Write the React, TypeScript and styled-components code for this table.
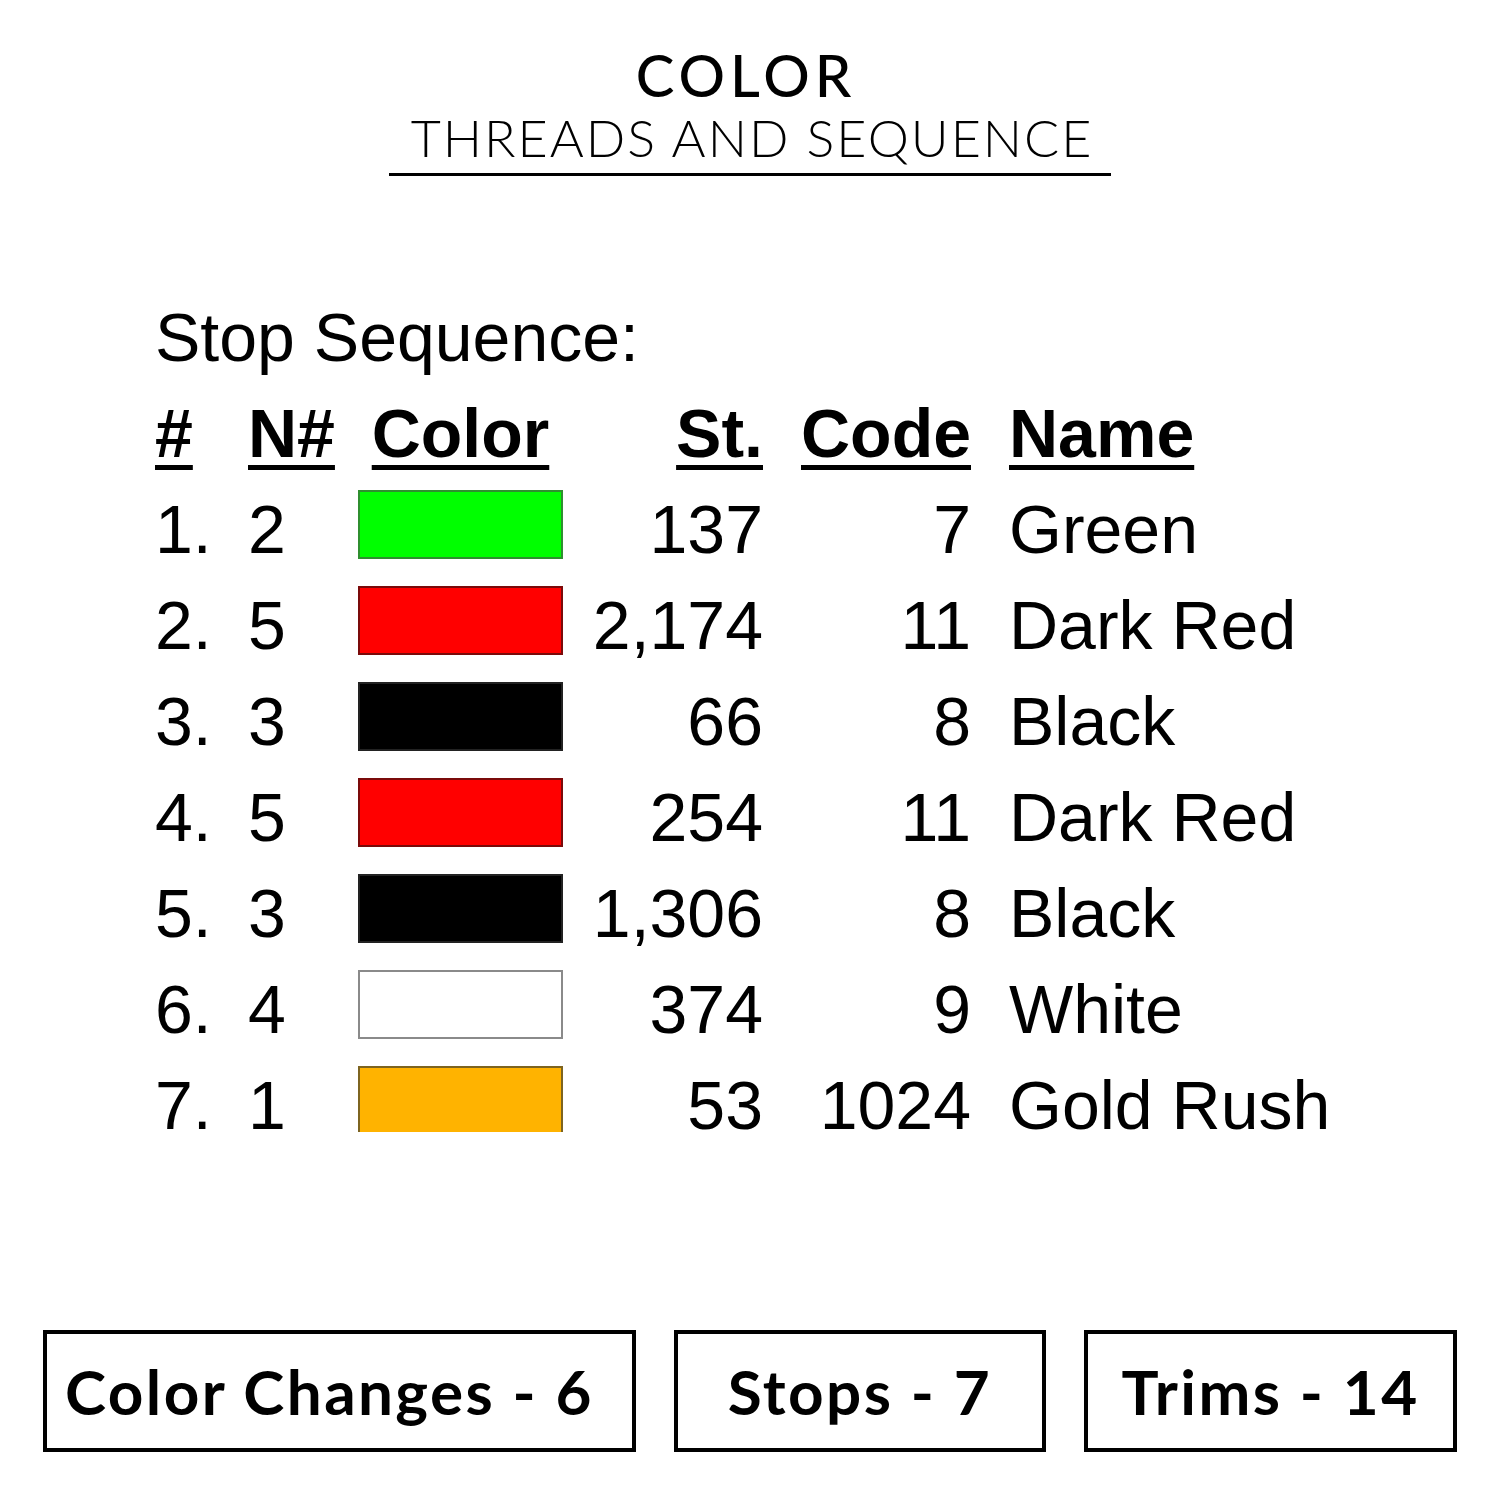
import React from 'react';
import styled, { createGlobalStyle } from 'styled-components';

const GlobalStyle = createGlobalStyle`
  html, body {
    margin: 0;
    padding: 0;
    background: #ffffff;
  }
`;

const Page = styled.div`
  width: 1500px;
  height: 1500px;
  display: flex;
  flex-direction: column;
  align-items: center;
  background: #ffffff;
  color: #000000;
  overflow: hidden;
`;

const Header = styled.div`
  display: flex;
  flex-direction: column;
  align-items: center;
  padding-top: 45px;
  font-family: Lato, 'Open Sans', sans-serif;
`;

const Title = styled.div`
  font-size: 58px;
  line-height: 60px;
  font-weight: 500;
  letter-spacing: 5px;
  margin-right: 8px;
`;

const Subtitle = styled.div`
  font-size: 52px;
  line-height: 64px;
  font-weight: 300;
  letter-spacing: 2px;
  padding: 0 18px 4px 22px;
  border-bottom: 3px solid #000;
`;

const Sheet = styled.div`
  align-self: stretch;
  padding-left: 155px;
  margin-top: 113px;
  font-family: 'Liberation Sans', Arial, sans-serif;
  font-size: 68px;
  line-height: 96px;
`;

const SheetTitle = styled.div`
  font-weight: 400;
`;

const Grid = styled.div`
  display: grid;
  grid-template-columns: 93px 110px 205px 200px 208px auto;
  grid-auto-rows: 96px;
`;

const Cell = styled.div<{ $align?: 'left' | 'right' | 'center'; $pad?: number }>`
  text-align: ${(p) => p.$align || 'left'};
  padding-left: ${(p) => p.$pad || 0}px;
  white-space: nowrap;
`;

const HeadCell = styled(Cell)`
  font-weight: 700;
  text-decoration: underline;
  text-decoration-thickness: 5px;
  text-underline-offset: 8px;
`;

const Swatch = styled.div<{ $fill: string; $edge: string; $cut?: boolean }>`
  width: 205px;
  height: ${(p) => (p.$cut ? 66 : 69)}px;
  margin-top: 9px;
  box-sizing: border-box;
  background: ${(p) => p.$fill};
  border: 2px solid ${(p) => p.$edge};
  border-bottom-width: ${(p) => (p.$cut ? 0 : 2)}px;
`;

const Stats = styled.div`
  margin-top: auto;
  align-self: stretch;
  display: flex;
  justify-content: space-between;
  padding: 0 43px 48px;
`;

const StatBox = styled.div<{ $w: number; $shift?: number }>`
  width: ${(p) => p.$w}px;
  height: 122px;
  box-sizing: border-box;
  border: 4px solid #000;
  padding-right: ${(p) => p.$shift || 0}px;
  display: flex;
  align-items: center;
  justify-content: center;
  font-family: Lato, 'Open Sans', sans-serif;
  font-weight: 700;
  font-size: 62px;
  letter-spacing: 2.4px;
  white-space: nowrap;
`;

const rows = [
  { n: 2, fill: '#00ff00', edge: '#2f8f2f', st: '137', code: '7', name: 'Green' },
  { n: 5, fill: '#ff0000', edge: '#7a0a0a', st: '2,174', code: '11', name: 'Dark Red' },
  { n: 3, fill: '#000000', edge: '#222222', st: '66', code: '8', name: 'Black' },
  { n: 5, fill: '#ff0000', edge: '#7a0a0a', st: '254', code: '11', name: 'Dark Red' },
  { n: 3, fill: '#000000', edge: '#222222', st: '1,306', code: '8', name: 'Black' },
  { n: 4, fill: '#ffffff', edge: '#8a8a8a', st: '374', code: '9', name: 'White' },
  { n: 1, fill: '#ffb300', edge: '#7d6420', st: '53', code: '1024', name: 'Gold Rush' },
];

const App: React.FC = () => {
  return (
    <Page>
      <GlobalStyle />
      <Header>
        <Title>COLOR</Title>
        <Subtitle>THREADS AND SEQUENCE</Subtitle>
      </Header>

      <Sheet>
        <SheetTitle>Stop Sequence:</SheetTitle>
        <Grid>
          <HeadCell>#</HeadCell>
          <HeadCell>N#</HeadCell>
          <HeadCell $align="center">Color</HeadCell>
          <HeadCell $align="right">St.</HeadCell>
          <HeadCell $align="right">Code</HeadCell>
          <HeadCell $pad={38}>Name</HeadCell>
          {rows.map((r, i) => (
            <React.Fragment key={i}>
              <Cell>{i + 1}.</Cell>
              <Cell>{r.n}</Cell>
              <Swatch $fill={r.fill} $edge={r.edge} $cut={i === rows.length - 1} />
              <Cell $align="right">{r.st}</Cell>
              <Cell $align="right">{r.code}</Cell>
              <Cell $pad={38}>{r.name}</Cell>
            </React.Fragment>
          ))}
        </Grid>
      </Sheet>

      <Stats>
        <StatBox $w={593} $shift={20}>Color Changes - 6</StatBox>
        <StatBox $w={372}>Stops - 7</StatBox>
        <StatBox $w={373}>Trims - 14</StatBox>
      </Stats>
    </Page>
  );
};

export default App;
